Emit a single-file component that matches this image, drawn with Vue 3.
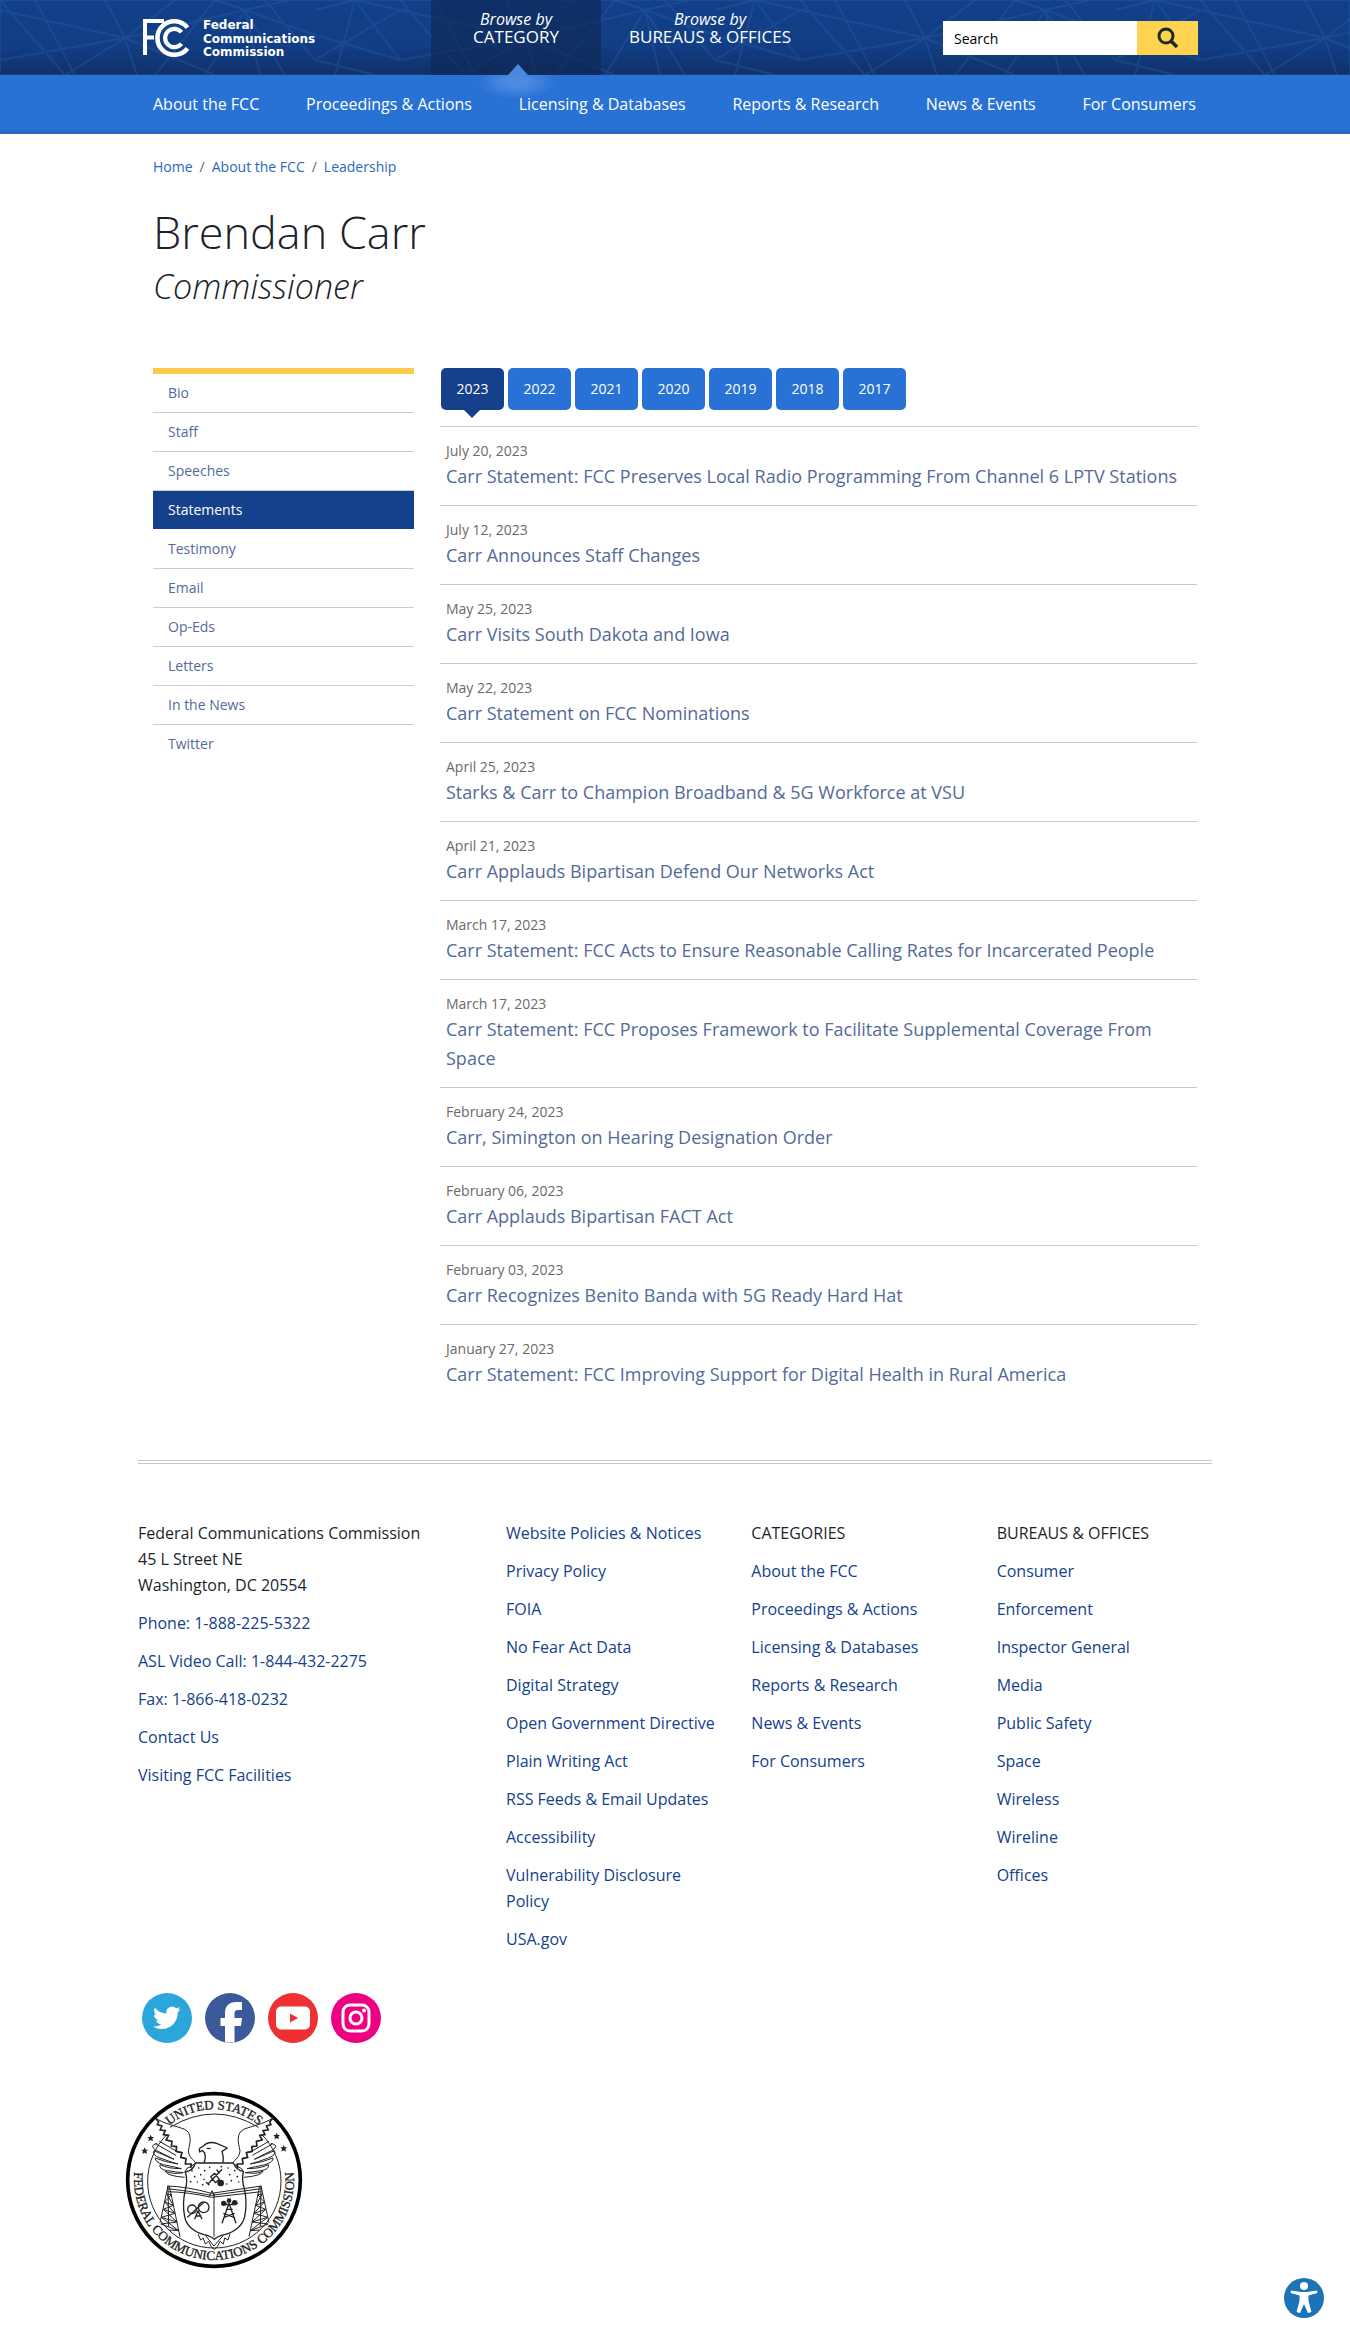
<script setup>
const nav = ['About the FCC', 'Proceedings & Actions', 'Licensing & Databases', 'Reports & Research', 'News & Events', 'For Consumers']
const crumbs = ['Home', 'About the FCC', 'Leadership']
const side = ['Bio', 'Staff', 'Speeches', 'Statements', 'Testimony', 'Email', 'Op-Eds', 'Letters', 'In the News', 'Twitter']
const years = [2023, 2022, 2021, 2020, 2019, 2018, 2017]
const statements = [
  ['July 20, 2023', 'Carr Statement: FCC Preserves Local Radio Programming From Channel 6 LPTV Stations'],
  ['July 12, 2023', 'Carr Announces Staff Changes'],
  ['May 25, 2023', 'Carr Visits South Dakota and Iowa'],
  ['May 22, 2023', 'Carr Statement on FCC Nominations'],
  ['April 25, 2023', 'Starks & Carr to Champion Broadband & 5G Workforce at VSU'],
  ['April 21, 2023', 'Carr Applauds Bipartisan Defend Our Networks Act'],
  ['March 17, 2023', 'Carr Statement: FCC Acts to Ensure Reasonable Calling Rates for Incarcerated People'],
  ['March 17, 2023', 'Carr Statement: FCC Proposes Framework to Facilitate Supplemental Coverage From Space'],
  ['February 24, 2023', 'Carr, Simington on Hearing Designation Order'],
  ['February 06, 2023', 'Carr Applauds Bipartisan FACT Act'],
  ['February 03, 2023', 'Carr Recognizes Benito Banda with 5G Ready Hard Hat'],
  ['January 27, 2023', 'Carr Statement: FCC Improving Support for Digital Health in Rural America'],
]
const contact = ['Phone: 1-888-225-5322', 'ASL Video Call: 1-844-432-2275', 'Fax: 1-866-418-0232', 'Contact Us', 'Visiting FCC Facilities']
const columns = [
  { links: ['Website Policies & Notices', 'Privacy Policy', 'FOIA', 'No Fear Act Data', 'Digital Strategy', 'Open Government Directive', 'Plain Writing Act', 'RSS Feeds & Email Updates', 'Accessibility', 'Vulnerability Disclosure Policy', 'USA.gov'] },
  { title: 'CATEGORIES', links: nav },
  { title: 'BUREAUS & OFFICES', links: ['Consumer', 'Enforcement', 'Inspector General', 'Media', 'Public Safety', 'Space', 'Wireless', 'Wireline', 'Offices'] },
]
const shieldDots = [[232, 272], [252, 264], [270, 272], [240, 290], [258, 284], [228, 305], [248, 306], [268, 298], [340, 264], [360, 272], [345, 284], [368, 290], [350, 302], [372, 306], [320, 260], [285, 262], [336, 312], [264, 314]]
const stars = [[108, 174], [90, 212], [486, 168], [507, 205]]
</script>

<template>
  <div class="page">
    <header>
      <div class="top">
        <svg class="mesh" viewBox="0 0 1350 75" preserveAspectRatio="xMidYMid slice" aria-hidden="true">
          <defs>
            <pattern id="mesh" width="400" height="75" patternUnits="userSpaceOnUse" x="-85">
              <path d="M85 0 150 75M85 10 210 38M85 60 210 38 260 0M210 38 190 0M210 38 222 75M210 38 300 75M210 38 150 75M210 38 330 10M120 0 160 75M240 75 300 0M330 10 400 35M330 10 345 75M330 10 290 75M330 10 370 75M350 0 400 60M300 0 330 10 375 0M0 60 85 10M0 35 85 60M0 60 60 75M0 10 40 0 85 60M20 75 40 0M40 0 85 10" />
            </pattern>
          </defs>
          <rect width="1350" height="75" fill="url(#mesh)" />
        </svg>
        <div class="wrap top-row">
          <a class="logo" href="#" aria-label="FCC home">
            <svg width="190" height="48" viewBox="0 0 190 48">
              <g fill="none" stroke="#fff">
                <path d="M4 39V5H23M4 21.500h9" stroke-width="4" />
                <path d="M46.500 11.700a16.800 16.800 0 1 0 0 20.600" stroke-width="4.600" />
                <path d="M40.500 16.200a9.200 9.200 0 1 0 0 11.600" stroke-width="4.200" />
              </g>
              <g class="logo-text">
                <text x="62" y="13">Federal</text>
                <text x="62" y="27">Communications</text>
                <text x="62" y="40">Commission</text>
              </g>
            </svg>
          </a>
          <div class="browse">
            <a href="#" class="browse-tab category active"><em>Browse by</em><span>CATEGORY</span></a>
            <a href="#" class="browse-tab bureaus"><em>Browse by</em><span>BUREAUS &amp; OFFICES</span></a>
          </div>
          <form class="search" @submit.prevent>
            <input type="text" placeholder="Search" aria-label="Search" />
            <button type="submit" aria-label="Submit search">
              <svg width="22" height="22" viewBox="0 0 22 22" fill="none" stroke="#1c2a24">
                <circle cx="9" cy="9" r="7" stroke-width="3" />
                <path d="m14 14 6 6" stroke-width="3.500" />
              </svg>
            </button>
          </form>
        </div>
      </div>
      <nav class="main-nav">
        <div class="wrap nav-row"><a v-for="n in nav" :key="n" href="#">{{ n }}</a></div>
      </nav>
    </header>

    <main class="wrap main">
      <nav class="crumbs" aria-label="Breadcrumb">
        <template v-for="(c, i) in crumbs" :key="c"><span v-if="i">/</span><a href="#">{{ c }}</a></template>
      </nav>
      <h1>Brendan Carr</h1>
      <p class="role">Commissioner</p>
      <div class="body">
        <nav class="side">
          <a v-for="s in side" :key="s" href="#" :class="{ active: s === 'Statements' }">{{ s }}</a>
        </nav>
        <section class="content">
          <div class="tabs">
            <button v-for="y in years" :key="y" type="button" :class="{ active: y === 2023 }">{{ y }}</button>
          </div>
          <article v-for="[date, title] in statements" :key="title">
            <time>{{ date }}</time>
            <h2><a href="#">{{ title }}</a></h2>
          </article>
        </section>
      </div>
    </main>

    <footer>
      <div class="wrap">
        <div class="rule">
          <div class="foot-grid">
            <div class="foot-col">
              <address>Federal Communications Commission<br />45 L Street NE<br />Washington, DC 20554</address>
              <a v-for="c in contact" :key="c" href="#">{{ c }}</a>
            </div>
            <div v-for="(col, i) in columns" :key="i" class="foot-col">
              <h3 v-if="col.title">{{ col.title }}</h3>
              <a v-for="l in col.links" :key="l" href="#">{{ l }}</a>
            </div>
          </div>
        </div>

        <div class="social">
          <a href="#" aria-label="Twitter">
            <svg viewBox="0 0 50 50"><circle cx="25" cy="25" r="25" fill="#2ba6dc" />
              <path transform="translate(11 11) scale(1.150)" fill="#fff" d="M23.950 4.570a10 10 0 0 1-2.820.770 4.960 4.960 0 0 0 2.160-2.720c-.950.560-2 .960-3.130 1.180a4.920 4.920 0 0 0-8.380 4.480C7.690 8.100 4.070 6.130 1.640 3.160a4.920 4.920 0 0 0 1.520 6.570 4.900 4.900 0 0 1-2.230-.610v.060a4.920 4.920 0 0 0 3.950 4.830 5 5 0 0 1-2.210.080 4.940 4.940 0 0 0 4.600 3.420A9.870 9.870 0 0 1 0 19.540a13.990 13.990 0 0 0 7.550 2.210c9.050 0 14-7.500 14-13.980 0-.210 0-.420-.020-.630a9.940 9.940 0 0 0 2.420-2.570z" /></svg>
          </a>
          <a href="#" aria-label="Facebook">
            <svg viewBox="0 0 50 50"><circle cx="25" cy="25" r="25" fill="#3c5a99" />
              <path fill="#fff" d="M20 49.500V33h-4.500v-8H20v-5c0-7 4-11 11-11h6v8h-4c-2.500 0-3.500 1.200-3.500 3.500V25H37l-1 8h-6.500v16.500z" /></svg>
          </a>
          <a href="#" aria-label="YouTube">
            <svg viewBox="0 0 50 50"><circle cx="25" cy="25" r="25" fill="#ee3033" />
              <rect x="8" y="13.500" width="34" height="23" rx="5" fill="#fff" /><path d="m22 20.500 8 4.500-8 4.500z" fill="#ee3033" /></svg>
          </a>
          <a href="#" aria-label="Instagram">
            <svg viewBox="0 0 50 50"><circle cx="25" cy="25" r="25" fill="#ed0082" />
              <g fill="none" stroke="#fff" stroke-width="3"><rect x="12" y="12" width="26" height="26" rx="7" /><circle cx="25" cy="25" r="6" /></g><circle cx="33" cy="17.500" r="2" fill="#fff" /></svg>
          </a>
        </div>

        <svg class="seal" viewBox="31 33 534 534" role="img" aria-label="Federal Communications Commission seal">
          <defs>
            <path id="arc-top" d="M86 300a212 212 0 0 1 424 0" />
            <path id="arc-bottom" d="M90 180a240 240 0 1 0 416 0" />
            <g id="wing">
              <path d="M122 114C150 132 185 138 210 148 234 160 226 190 221 212 222 232 236 238 244 250L216 266 210 278" />
              <path d="M122 114 132 126 128 134 142 138 136 150 152 152 146 164 162 166 154 180 172 184 170 198 186 200 184 214 202 218 198 232 214 236 212 252 230 252 228 264" stroke-width="5" />
              <path d="M128 190Q100 196 126 212 156 226 178 238 140 222 118 212 110 224 136 234 168 246 190 252 150 246 122 234 120 246 146 254 176 260 200 266 160 266 136 254 132 268 158 272 184 276 206 278 176 284 152 274 158 288 210 292M124 192 184 226M134 184 190 216" />
            </g>
            <g id="tower">
              <path d="M160 318 136 428M164 318 196 470M156 342 170 344M150 366 176 376M146 388 181 400M140 412 187 426M139 432 192 452M156 342 176 376 146 388 187 426 138 432M170 344 150 366 181 400 140 412 192 452 164 450M160 318 162 440" />
            </g>
          </defs>
          <circle cx="298" cy="300" r="259" fill="#fff" stroke="#000" stroke-width="11" />
          <circle cx="299" cy="304" r="200" fill="none" stroke="#222" stroke-width="3" />
          <path d="M122 114 160 128Q298 24 436 128L474 112 440 165Q300 55 156 165Z" fill="#fff" />
          <path d="M166 142Q299 62 432 142" fill="none" stroke="#222" stroke-width="3" />
          <g fill="none" stroke="#222" stroke-width="3" stroke-linejoin="round">
            <use href="#wing" /><use href="#wing" transform="matrix(-1 0 0 1 597 0)" />
            <use href="#tower" /><use href="#tower" transform="matrix(-1 0 0 1 599 0)" />
            <path d="M268 248Q274 236 270 219L263 211 255 216Q250 204 264 200 280 182 306 190L338 204 322 214Q328 232 325 248M276 205l12 1" stroke-width="4" />
            <path d="M242 249H356Q366 272 386 274 380 300 390 330 398 370 390 410 380 450 330 464 310 468 299 478 288 468 268 464 218 450 210 410 202 370 212 330 220 300 212 276 236 272 242 249Z" fill="#fff" stroke-width="4" />
            <path d="M158 318Q220 320 290 340L440 318M158 326Q220 332 290 346L440 326M158 335Q220 336 290 352L440 335M298 340V470M284 350l8-18 8 18" />
            <path d="m250 462 8 18 8-6 6 18 10-8 8 16 9 8 9-8 8-16 10 8 4-18 10 6 6-18M272 466l26 32 28-32" />
            <circle cx="232" cy="388" r="13" stroke-width="4" /><circle cx="267" cy="382" r="16" stroke-width="4" />
            <path d="m218 412 48-44M240 418l10-26 12 26M244 408h16M322 430l21-60 21 60M328 412l32-12M326 400l36 14M334 388l20 0M330 374h28M320 370h16M350 370h20" stroke-width="4" />
            <path d="m280 312 42-44M288 290l14 18 12-10-14-18zM306 268l8 12M274 306l10 10" stroke-width="4" />
          </g>
          <g fill="#222">
            <circle v-for="(d, i) in shieldDots" :key="i" :cx="d[0]" :cy="d[1]" r="2.500" />
            <circle cx="318" cy="309" r="10" /><circle cx="327" cy="370" r="8" /><circle cx="343" cy="362" r="7" /><circle cx="360" cy="368" r="8" />
            <path v-for="(s, i) in stars" :key="'s' + i" :transform="`translate(${s[0]} ${s[1]})`" d="m0-10 3 7h7l-5 5 2 8-7-4-7 4 2-8-5-5h7z" />
          </g>
          <g class="seal-text">
            <text text-anchor="middle"><textPath href="#arc-top" startOffset="50%">UNITED STATES</textPath></text>
            <text text-anchor="middle"><textPath href="#arc-bottom" startOffset="50%">FEDERAL COMMUNICATIONS COMMISSION</textPath></text>
          </g>
        </svg>
      </div>
    </footer>

    <button class="access" type="button" aria-label="Accessibility options">
      <svg viewBox="0 0 40 40"><circle cx="20" cy="20" r="20" fill="#1a74b5" />
        <g fill="#fff"><circle cx="20" cy="8" r="4" /><path d="M7 12.500 17 14h6l10-1.500.5 2.500-9 2.500V23l3 11-3.500 1L20 26l-4 9-3.500-1 3-11v-5.500L6.500 15z" /></g></svg>
    </button>
  </div>
</template>

<style>
body { margin: 0; background: #fff; }
</style>

<style scoped>
* { box-sizing: border-box; }
.page { font-family: "Open Sans", sans-serif; font-size: 16px; line-height: 26px; color: #1d1f2b; padding-bottom: 78px; }
a { color: #14418c; text-decoration: none; }
button { border: 0; padding: 0; font: inherit; cursor: pointer; }
svg { display: block; }
.wrap { max-width: 1074px; margin: 0 auto; }
.top { position: relative; background: linear-gradient(#123f88, #123e85 60%, #103168); }
.mesh { position: absolute; inset: 0; width: 100%; height: 100%; fill: none; stroke: #2b63ad; stroke-opacity: .3; stroke-width: 2; }
.top-row { position: relative; display: flex; height: 75px; }
.logo { width: 293px; padding: 16px 0 0 3px; }
.logo-text { font: bold 12px "DejaVu Sans", sans-serif; fill: #fff; }
.browse { display: flex; flex: 1; }
.browse-tab { position: relative; display: flex; flex-direction: column; align-items: center; padding-top: 11px; color: #fff; font-size: 17px; line-height: 17px; }
.browse-tab em { font-size: 16px; }
.category { width: 170px; }
.bureaus { width: 218px; }
.browse-tab.active { background: rgba(14, 38, 80, .6); }
.browse-tab.active::before { content: ""; position: absolute; left: 77px; bottom: 0; width: 20px; height: 11px; background: #4a87e0; clip-path: polygon(50% 0, 100% 100%, 0 100%); }
.browse-tab.active::after { content: ""; position: absolute; left: 46px; top: 75px; width: 80px; height: 24px; background: radial-gradient(ellipse at 50% 30%, #4d8ae2, #4d8ae2 20%, rgba(77, 138, 226, 0) 70%); }
.search { display: flex; width: 255px; height: 34px; margin: 21px 14px 0 0; }
.search input { flex: 1; min-width: 0; border: 0; border-radius: 0; padding: 0 11px; background: #fff; font: 14px "Open Sans", sans-serif; color: #000; }
.search input::placeholder { color: #000; opacity: 1; }
.search button { display: grid; place-items: center; width: 61px; background: #fdd350; }
.main-nav { background: #2972d5; border-bottom: 3px solid #2969c0; }
.nav-row { display: flex; justify-content: space-between; padding: 16px 16px 14px 15px; }
.nav-row a { color: #fff; }
.main { padding: 20px 15px 0; }
.crumbs { display: flex; gap: 7px; font-size: 14px; color: #666; }
.crumbs a { color: #2b67bd; }
h1 { margin: 27px 0 7px; font-size: 45px; line-height: 50px; font-weight: 300; }
.role { margin: 0 0 60px; font-size: 34px; line-height: 44px; font-weight: 300; font-style: italic; }
.body { display: grid; grid-template-columns: 1fr 3fr; }
.side { border-top: 6px solid #fdcb4c; font-size: 14px; align-self: start; }
.side a { display: block; padding: 6px 15px; border-bottom: 1px solid #ccc; color: #546a98; }
.side a.active { background: #15418c; border-color: #fff; color: #fff; }
.side a:last-child { border: 0; }
.content { margin-left: 26px; }
.tabs { display: flex; gap: 4px; padding: 0 0 16px 1px; }
.tabs button { position: relative; width: 63px; height: 42px; border-radius: 5px; background: #2972d5; color: #fff; font-size: 14px; }
.tabs button.active { background: #15418c; }
.tabs button.active::after { content: ""; position: absolute; left: 23px; top: 42px; width: 16px; height: 8px; background: #15418c; clip-path: polygon(0 0, 100% 0, 50% 100%); }
article { border-top: 1px solid #c8c8c8; padding: 13px 6px 14px; }
time { display: block; font-size: 14px; line-height: 22px; color: #6a6a6a; }
h2 { margin: 0; font-size: 18px; line-height: 29px; font-weight: 400; }
h2 a { color: #546a98; }
footer { padding-top: 57px; }
.rule { border-top: 4px double #c8c8c8; padding-top: 56px; }
.foot-grid { display: grid; grid-template-columns: 3fr 2fr 2fr 2fr; margin-right: -30px; }
.foot-col { display: flex; flex-direction: column; align-items: flex-start; gap: 12px; padding-right: 30px; }
address { font-style: normal; }
h3 { margin: 0; font-size: 16px; line-height: 26px; font-weight: 400; }
.social { display: flex; gap: 13px; margin: 41px 0 48px; padding-left: 4px; }
.social svg { width: 50px; height: 50px; }
.seal { width: 178px; height: 178px; margin-left: -13px; }
.seal-text { font: 39px "Liberation Serif", serif; fill: #222; stroke: #222; stroke-width: 1; }
.access { position: fixed; right: 26px; bottom: 31px; width: 40px; height: 40px; border-radius: 50%; background: none; }
</style>
